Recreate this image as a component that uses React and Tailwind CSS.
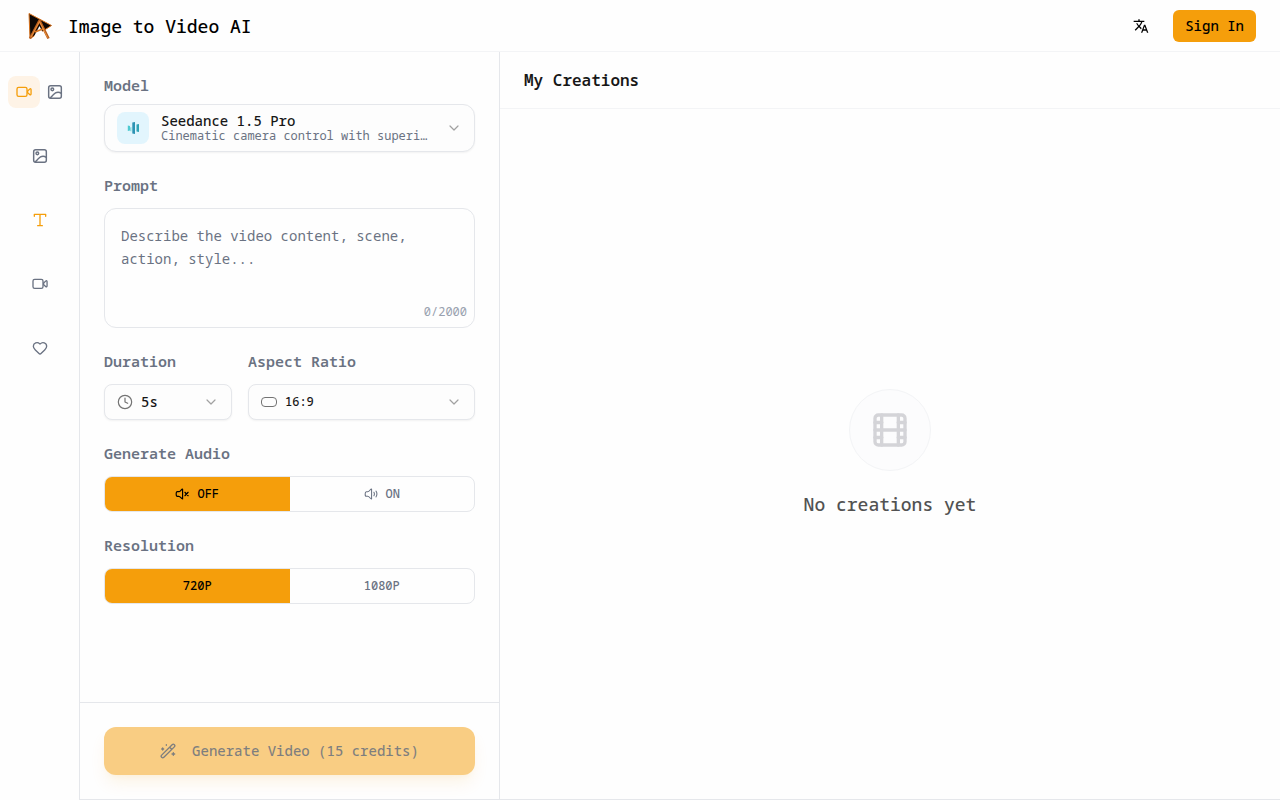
import { useState } from "react";
import { ChevronDown, Clock, Film, Heart } from "lucide-react";
import { MdTranslate } from "react-icons/md";

function Icon({ className = "size-4", width = 1.5, children }) {
  return (
    <svg viewBox="0 0 24 24" fill="none" stroke="currentColor" strokeWidth={width} strokeLinecap="round" strokeLinejoin="round" className={className} aria-hidden="true">
      {children}
    </svg>
  );
}

const VideoIcon = () => (
  <Icon width={2}>
    <rect x="1.5" y="5" width="15" height="13.5" rx="2.5" />
    <path d="M17.500 10.500 20.500 7.700C21.600 6.700 22.600 7.200 22.600 8.800v6c0 1.600-1 2.100-2.100 1.100L17.500 13.200Z" />
  </Icon>
);

const ImageIcon = () => (
  <Icon width={2.2}>
    <rect x="2.500" y="2.500" width="19" height="19" rx="3" />
    <circle cx="8" cy="8" r="2" />
    <path d="M5 21C9.400 15.800 14.300 8.900 21.500 14" />
  </Icon>
);

const TextIcon = () => (
  <Icon width={2}>
    <path d="M3.500 6.500V3.500h17v3M12 3.500v17M8.500 20.500h7" />
  </Icon>
);

const MutedIcon = () => (
  <Icon className="size-3.5" width={2}>
    <path d="M13 3.500v17c-2.500 0-3.500-4.500-6.500-4.500H4C2.300 16 2 14.500 2 12s.3-4 2-4h2.500C9.500 8 10.500 3.500 13 3.500ZM17 9l5.500 6m0-6L17 15" />
  </Icon>
);

const SoundIcon = () => (
  <Icon className="size-3.5" width={1.8}>
    <path d="M13 3.500v17c-2.500 0-3.500-4.500-6.500-4.500H4C2.300 16 2 14.500 2 12s.3-4 2-4h2.500C9.500 8 10.500 3.500 13 3.500ZM17 9c1 1.800 1 4.200 0 6M20.500 7c2 3 2 7 0 10" />
  </Icon>
);

const WandIcon = () => (
  <Icon width={2}>
    <path d="M2.500 18.200 18.200 2.500a2.300 2.300 0 0 1 3.300 3.300L5.800 21.500a2.300 2.300 0 0 1-3.300-3.300ZM14.500 6.500l3 3" />
    <path d="M9.500 2.500v1M4 7.500v3M2.500 9h3M20 14.500v4M18 16.500h4" />
  </Icon>
);

function Logo() {
  return (
    <svg viewBox="0 0 32 32" className="size-8" aria-hidden="true">
      <path d="M5 3.500 27.500 15.500 20.500 20 6 28.500Z" fill="#0d0806" stroke="#d9731d" strokeWidth="1" strokeLinejoin="round" />
      <path d="M11.500 23.500 15.500 16 18.500 22 22 29 9 29Z" fill="#fefefe" />
      <path d="M6 28.500 15.500 10.500 24.500 28.500" fill="none" stroke="#b95f1e" strokeWidth="2.600" strokeLinejoin="round" />
      <path d="M11 22 20 18.500" stroke="#d9731d" strokeWidth="1.800" />
      <path d="M7 27 15.500 11.500 23.500 27.500" fill="none" stroke="#f29a45" strokeWidth="0.800" />
    </svg>
  );
}

const label = "pb-0.5 text-[15px] leading-[18px] font-semibold text-gray-500";

function Segmented({ id, title, options, value, onChange }) {
  return (
    <section>
      <h2 id={id} className={label}>{title}</h2>
      <div role="group" aria-labelledby={id} className="mt-3 flex h-9 overflow-hidden rounded-lg border border-gray-200">
        {options.map((o) => (
          <button
            key={o.name}
            type="button"
            aria-pressed={value === o.name}
            onClick={() => onChange(o.name)}
            className={`flex flex-1 items-center justify-center gap-2 text-xs font-medium ${value === o.name ? "bg-[#f59e0b] text-black" : "text-gray-500"}`}
          >
            {o.icon}
            {o.name}
          </button>
        ))}
      </div>
    </section>
  );
}

export default function App() {
  const [prompt, setPrompt] = useState("");
  const [audio, setAudio] = useState("OFF");
  const [resolution, setResolution] = useState("720P");
  const side = "flex size-8 items-center justify-center rounded-lg";
  const select = "h-9 w-full appearance-none rounded-lg border border-gray-200 bg-[#fdfdfd] pr-9 font-medium text-neutral-900 shadow-xs";
  const chevron = "pointer-events-none absolute inset-y-0 right-[13px] my-auto size-4 text-neutral-400";

  return (
    <div className="flex min-h-screen flex-col bg-[#fefefe] font-['Noto_Sans_Mono','DejaVu_Sans_Mono',monospace] text-neutral-900">
      <header className="flex h-13 items-center justify-between border-b border-gray-100 px-6">
        <a href="#" className="flex items-center gap-3 text-lg font-medium text-black">
          <Logo />
          Image to Video AI
        </a>
        <div className="flex items-center gap-4">
          <button type="button" aria-label="Change language" className="flex size-8 items-center justify-center text-black">
            <MdTranslate className="size-4" />
          </button>
          <button type="button" className="h-8 rounded-md bg-[#f59e0b] px-3 text-sm font-medium text-black">Sign In</button>
        </div>
      </header>

      <div className="flex flex-1">
        <nav aria-label="Tools" className="flex w-20 shrink-0 flex-col items-center gap-8 border-r border-gray-200 pt-6 text-gray-500">
          <div className="flex gap-[7px] self-start pl-2">
            <a href="#" aria-label="Image to video" className={`${side} bg-[#fef3e6] text-[#f59e0b]`}><VideoIcon /></a>
            <a href="#" aria-label="Image" className="flex h-8 items-center"><ImageIcon /></a>
          </div>
          <a href="#" aria-label="Images" className={side}><ImageIcon /></a>
          <a href="#" aria-label="Text to video" className={`${side} text-[#f59e0b]`}><TextIcon /></a>
          <a href="#" aria-label="Videos" className={side}><VideoIcon /></a>
          <a href="#" aria-label="Favorites" className={side}><Heart className="size-4" strokeWidth={2} /></a>
        </nav>

        <div className="flex flex-1 border-b border-gray-200">
          <form className="flex w-105 shrink-0 flex-col border-r border-gray-200" onSubmit={(e) => e.preventDefault()}>
            <div className="flex flex-1 flex-col gap-6 p-6">
              <section>
                <h2 id="model" className={label}>Model</h2>
                <button type="button" aria-haspopup="listbox" aria-labelledby="model model-name" className="mt-2 flex h-12 w-full items-center gap-3 rounded-xl border border-gray-200 bg-[#fdfdfd] px-3 text-left shadow-xs">
                  <span className="flex size-8 shrink-0 items-center justify-center rounded-lg bg-[#e2f5fd]">
                    <svg viewBox="0 0 16 16" className="size-4" aria-hidden="true">
                      <path d="M2.800 5.500 5 6v4.500l-2.200.5Z" fill="#4cc9d0" />
                      <path d="M5 7.500 6.500 7v4.500L5 11Z" fill="#8fdde0" />
                      <path d="M7.300 2.500 10 2v12l-2.700-.5Z" fill="#2d93b3" />
                      <path d="M11.500 4.500 14 4v8l-2.500-.5Z" fill="#2fa3b5" />
                    </svg>
                  </span>
                  <span className="flex min-w-0 flex-1 flex-col">
                    <span id="model-name" className="text-sm leading-4 font-medium">Seedance 1.5 Pro</span>
                    <span className="truncate text-xs leading-3.5 text-gray-500">Cinematic camera control with superior motion</span>
                  </span>
                  <ChevronDown className="ml-1 size-4 shrink-0 text-neutral-400" strokeWidth={1.8} />
                </button>
              </section>

              <section>
                <label htmlFor="prompt" className={`block ${label}`}>Prompt</label>
                <div className="relative mt-3">
                  <textarea
                    id="prompt"
                    maxLength={2000}
                    value={prompt}
                    onChange={(e) => setPrompt(e.target.value)}
                    placeholder="Describe the video content, scene, action, style..."
                    className="block h-30 w-full resize-none rounded-xl border border-gray-200 px-4 pt-[15px] pb-4 text-sm leading-[23px] placeholder:text-gray-500"
                  />
                  <span className="absolute right-2 bottom-2 text-xs text-gray-400">{prompt.length}/2000</span>
                </div>
              </section>

              <div className="flex gap-4">
                <section className="w-32">
                  <label htmlFor="duration" className={`block ${label}`}>Duration</label>
                  <div className="relative mt-3">
                    <select id="duration" className={`${select} pl-9 text-sm`}>
                      <option>5s</option>
                      <option>10s</option>
                    </select>
                    <Clock className="pointer-events-none absolute inset-y-0 left-[13px] my-auto size-4 text-neutral-500" strokeWidth={1.8} />
                    <ChevronDown className={chevron} strokeWidth={1.8} />
                  </div>
                </section>
                <section className="flex-1">
                  <label htmlFor="ratio" className={`block ${label}`}>Aspect Ratio</label>
                  <div className="relative mt-3">
                    <select id="ratio" className={`${select} pl-9 text-xs`}>
                      <option>16:9</option>
                      <option>9:16</option>
                      <option>1:1</option>
                    </select>
                    <span className="pointer-events-none absolute inset-y-0 left-[13px] my-auto h-2.5 w-4 rounded border border-neutral-500" />
                    <ChevronDown className={chevron} strokeWidth={1.8} />
                  </div>
                </section>
              </div>

              <Segmented id="audio" title="Generate Audio" value={audio} onChange={setAudio} options={[{ name: "OFF", icon: <MutedIcon /> }, { name: "ON", icon: <SoundIcon /> }]} />
              <Segmented id="resolution" title="Resolution" value={resolution} onChange={setResolution} options={[{ name: "720P" }, { name: "1080P" }]} />
            </div>

            <div className="border-t border-gray-200 p-6">
              <button type="submit" disabled className="flex h-12 w-full items-center justify-center gap-4 rounded-xl bg-[#f59e0b] text-sm font-medium text-black opacity-50 shadow-lg shadow-[#f59e0b]/20">
                <WandIcon />
                Generate Video (15 credits)
              </button>
            </div>
          </form>

          <main className="flex flex-1 flex-col">
            <div className="flex h-[57px] items-center border-b border-gray-100 px-6">
              <h1 className="text-base font-semibold">My Creations</h1>
            </div>
            <div className="flex flex-1 flex-col items-center justify-center gap-5">
              <div className="flex size-[82px] items-center justify-center rounded-full border border-gray-100 bg-[#fcfcfd]">
                <Film className="size-10 text-zinc-300" />
              </div>
              <p className="pb-0.5 text-lg leading-[26px] font-medium text-neutral-600">No creations yet</p>
            </div>
          </main>
        </div>
      </div>
    </div>
  );
}
